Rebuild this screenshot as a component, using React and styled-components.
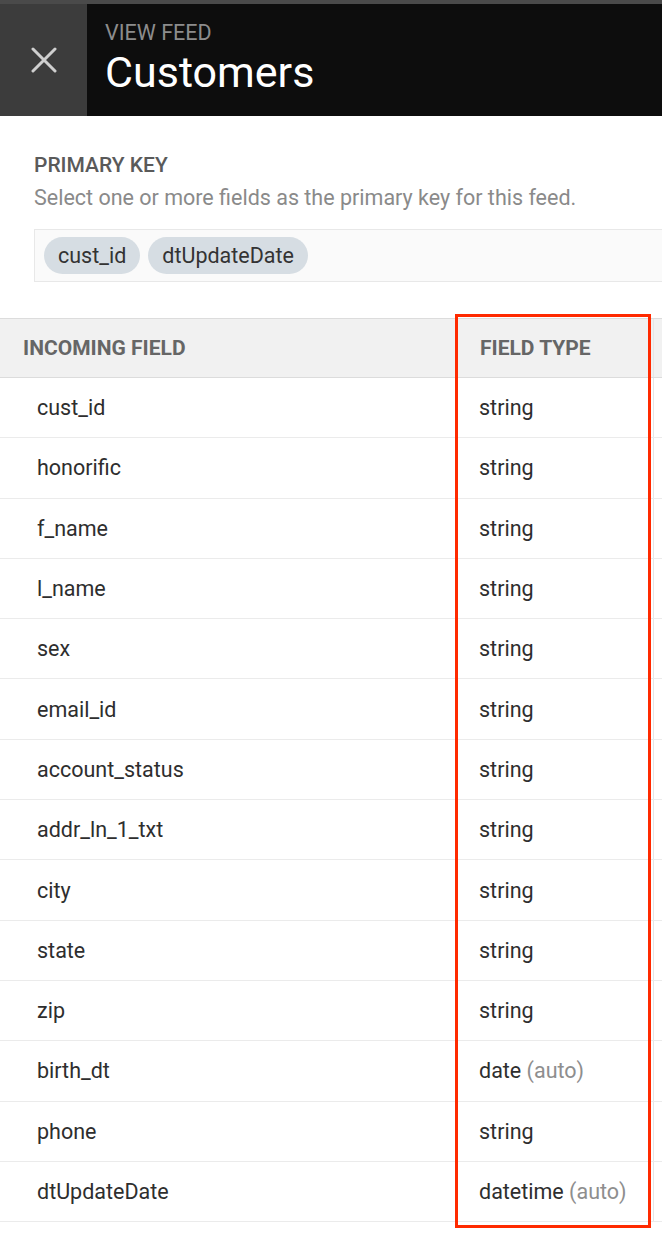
import React from "react";
import styled, { createGlobalStyle } from "styled-components";

const fields = [
  { name: "cust_id", type: "string" },
  { name: "honorific", type: "string" },
  { name: "f_name", type: "string" },
  { name: "l_name", type: "string" },
  { name: "sex", type: "string" },
  { name: "email_id", type: "string" },
  { name: "account_status", type: "string" },
  { name: "addr_ln_1_txt", type: "string" },
  { name: "city", type: "string" },
  { name: "state", type: "string" },
  { name: "zip", type: "string" },
  { name: "birth_dt", type: "date", auto: true },
  { name: "phone", type: "string" },
  { name: "dtUpdateDate", type: "datetime", auto: true },
];

const primaryKeys = ["cust_id", "dtUpdateDate"];

function App() {
  return (
    <Page>
      <GlobalStyle />
      <Header>
        <CloseButton aria-label="close">
          <svg width="26" height="26" viewBox="0 0 26 26">
            <path d="M2 2 L24 24 M24 2 L2 24" stroke="#cfcfcf" strokeWidth="3" strokeLinecap="round" />
          </svg>
        </CloseButton>
        <TitleBlock>
          <Eyebrow>VIEW FEED</Eyebrow>
          <Title>Customers</Title>
        </TitleBlock>
      </Header>

      <KeySection>
        <SectionLabel>PRIMARY KEY</SectionLabel>
        <Hint>Select one or more fields as the primary key for this feed.</Hint>
        <ChipBox>
          {primaryKeys.map((k) => (
            <Chip key={k}>{k}</Chip>
          ))}
        </ChipBox>
      </KeySection>

      <TableWrap>
        <HeadRow>
          <HeadCell $pad={23}>INCOMING FIELD</HeadCell>
          <HeadCell $pad={25}>FIELD TYPE</HeadCell>
          <Extra />
        </HeadRow>
        {fields.map((f) => (
          <Row key={f.name}>
            <Cell $pad={37}>{f.name}</Cell>
            <Cell $pad={24}>
              {f.type}
              {f.auto && <Auto> (auto)</Auto>}
            </Cell>
            <Extra />
          </Row>
        ))}
        <Highlight />
      </TableWrap>
      <Spacer />
    </Page>
  );
}

export default App;

const GlobalStyle = createGlobalStyle`
  body {
    margin: 0;
    background: #ffffff;
    font-family: Roboto, "Liberation Sans", sans-serif;
  }
`;

const Page = styled.div`
  width: 662px;
  overflow: hidden;
`;

const Header = styled.div`
  display: flex;
  height: 112px;
  border-top: 4px solid #4a4a4a;
  background: #0d0d0d;
`;

const CloseButton = styled.div`
  width: 87px;
  background: #3c3c3c;
  display: flex;
  align-items: center;
  justify-content: center;
`;

const TitleBlock = styled.div`
  display: flex;
  flex-direction: column;
  padding: 17px 0 0 18px;
`;

const Eyebrow = styled.div`
  color: #8c8c8c;
  font-size: 21.5px;
  line-height: 24px;
`;

const Title = styled.div`
  color: #ffffff;
  font-size: 43px;
  line-height: 50px;
  margin-top: 2px;
`;

const KeySection = styled.div`
  padding: 36px 0 0 34px;
`;

const SectionLabel = styled.div`
  color: #5a5a5a;
  font-size: 21px;
  font-weight: 500;
  line-height: 26px;
`;

const Hint = styled.div`
  color: #8a8a8a;
  font-size: 21.5px;
  line-height: 26px;
  margin-top: 7px;
`;

const ChipBox = styled.div`
  display: flex;
  gap: 8px;
  margin-top: 18px;
  padding: 7px 9px;
  background: #fafafa;
  border: 1px solid #e8e8e8;
  border-right: none;
  height: 37px;
`;

const Chip = styled.div`
  background: #d6dde3;
  color: #333;
  font-size: 21.5px;
  height: 37px;
  line-height: 37px;
  padding: 0 14px;
  border-radius: 19px;
`;

const TableWrap = styled.div`
  position: relative;
  margin-top: 36px;
`;

const HeadRow = styled.div`
  display: grid;
  grid-template-columns: 455px 198px 1fr;
  height: 60px;
  box-sizing: border-box;
  background: #f1f1f1;
  border-top: 1px solid #dcdcdc;
  border-bottom: 1px solid #dcdcdc;
`;

const HeadCell = styled.div`
  display: flex;
  align-items: center;
  padding-left: ${(p) => p.$pad}px;
  color: #666;
  font-size: 21px;
  font-weight: 700;
`;

const Row = styled.div`
  display: grid;
  grid-template-columns: 455px 198px 1fr;
  height: 60.3px;
  box-sizing: border-box;
  border-bottom: 1px solid #ebebeb;
`;

const Cell = styled.div`
  display: flex;
  align-items: center;
  padding-left: ${(p) => p.$pad}px;
  color: #2e2e2e;
  font-size: 21.5px;
  white-space: pre;
`;

const Extra = styled.div`
  border-left: 1px solid #e6e6e6;
`;

const Auto = styled.span`
  color: #8e8e8e;
`;

const Highlight = styled.div`
  position: absolute;
  left: 455px;
  top: -4px;
  bottom: -6px;
  width: 196px;
  box-sizing: border-box;
  border: 3px solid #ff2a00;
  pointer-events: none;
`;

const Spacer = styled.div`
  height: 14px;
`;
